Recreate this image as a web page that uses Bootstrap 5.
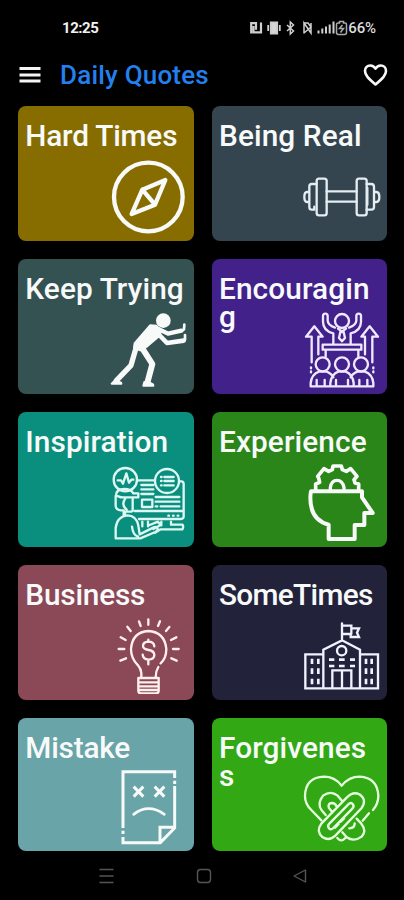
<!DOCTYPE html>
<html lang="en">
<head>
<meta charset="utf-8">
<meta name="viewport" content="width=device-width, initial-scale=1">
<title>Daily Quotes</title>
<link href="https://cdn.jsdelivr.net/npm/bootstrap@5.3.0/dist/css/bootstrap.min.css" rel="stylesheet">
<style>
body{background:#000;font-family:Roboto,"Liberation Sans",sans-serif;height:900px;overflow:hidden}
.status{height:50px;padding:6px 28px 0 62px;color:#dcdcdc}
.clock{font-size:15px;font-weight:700;letter-spacing:-.45px;color:#f2f2f2}
.pct{font-size:15px;font-weight:500;letter-spacing:-.1px;line-height:1}
.topbar{height:56px;padding:0 16px 6px 19px}
.app-title{color:#2380ee;font-size:26px;font-weight:500;letter-spacing:.2px;line-height:1;margin-left:19px}
.tiles{display:grid;grid-template-columns:175.7px 175.7px;grid-template-rows:repeat(4,135px) 133px;gap:18px;padding:0 0 0 18px}
.tile{border:0;border-radius:8px;overflow:hidden;padding:16px 5.600px 6px 7.300px}
.tile-title{color:#f8faf9;font-size:29.8px;font-weight:500;line-height:28px;letter-spacing:.1px;margin:0;height:33px;white-space:nowrap}
.tight{letter-spacing:-.7px}
.snug{letter-spacing:-.2px}
.art{width:80px;height:80px;flex:none;fill:none;stroke:#f8faf9;stroke-width:9;stroke-linejoin:round;stroke-linecap:round}
.solid{fill:#f8faf9}
.c1{background:#876d00}.c2{background:#344550}.c3{background:#355252}.c4{background:#42218a}.c5{background:#0a8f7e}
.c6{background:#2a8618}.c7{background:#8b4857}.c8{background:#22233b}.c9{background:#69a4a9}.c10{background:#31a814}
.sysbar{height:49px;padding:0 97px 0 98px}
.sysbar svg{fill:none;stroke:#555;stroke-width:1.4}
</style>
<script src="https://cdn.jsdelivr.net/npm/bootstrap@5.3.0/dist/js/bootstrap.bundle.min.js"></script>
</head>
<body>
<div class="status d-flex align-items-center justify-content-between">
  <span class="clock">12:25</span>
  <div class="d-flex align-items-center">
    <svg width="98" height="16" viewBox="0 0 98 16" fill="none" stroke="#cfcfcf" stroke-width="2.200">
      <path d="M1.200 13.500V3.200H6v6.500M3.500 6v6.400h7.500V2.500"/>
      <path d="M21 2.500h6v11h-6z" fill="#d8d8d8"/><path d="M18.200 5v6M29.800 5v6" stroke-width="1.800"/>
      <path d="M37 5l6.500 6-3.200 3V2l3.200 3L37 11" stroke-width="1.500"/>
      <path d="M54 13.500V3l7 10V3M54 3h4l3 4-7 6" stroke-width="1.500"/>
      <path d="M68.500 13.500v-3M72.300 13.500v-5M76 13.500v-7M79.700 13.500v-9M83.500 13.500v-12" stroke-width="2"/>
      <path d="M89.500 3V1.500h4V3h1.500q1.500 0 1.500 1.500v8q0 2-2 2h-6q-2 0-2-2v-8Q86.500 3 88 3zM92.500 5l-3 3.500h4l-3 4" stroke="#aaa" stroke-width="1.500"/>
    </svg>
    <span class="pct">66%</span>
  </div>
</div>
<nav class="topbar d-flex align-items-center">
  <svg width="22" height="16" viewBox="0 0 22 16" stroke="#f5f5f5" stroke-width="2.800"><path d="M.5 1.500h21M.5 8h21M.5 14h21"/></svg>
  <h1 class="app-title mb-0">Daily Quotes</h1>
  <svg class="ms-auto" width="25" height="23" viewBox="0 0 25 23" fill="none" stroke="#f8f8f8" stroke-width="2.600" stroke-linejoin="round"><path d="M12.500 20.500C5 14 2 11 2 7C2 3.500 4.500 1.500 7.200 1.500c2.300 0 4.200 1.200 5.300 3.200C13.600 2.700 15.500 1.500 17.800 1.500C20.500 1.500 23 3.500 23 7c0 4-3 7-10.500 13.500z"/></svg>
</nav>
<main class="tiles">
  <section class="tile card c1"><h2 class="tile-title snug">Hard Times</h2>
    <svg class="art ms-auto" viewBox="295 165 240 240"><g stroke-width="13"><circle cx="416" cy="291" r="103"/><path d="M467 240L398 269L366 342L436 314zM398 269L436 314"/></g></svg></section>
  <section class="tile card c2"><h2 class="tile-title">Being Real</h2>
    <svg class="art ms-auto" viewBox="294 165 240 240"><g stroke-width="7" stroke="#e4edf2"><rect x="338" y="236" width="30" height="110" rx="7"/><rect x="458" y="236" width="30" height="110" rx="7"/><path d="M368 274h90M368 305h90M338 252h-15q-7 0-7 7v63q0 7 7 7h8M316 276h-7q-8 0-8 15t8 15h7M488 252h14q8 0 8 8v61q0 8-8 8h-14M490 264v50M510 276h7q9 0 9 15t-9 15h-7M331 320v8"/></g></svg></section>
  <section class="tile card c3"><h2 class="tile-title">Keep Trying</h2>
    <svg class="art ms-auto" viewBox="295 162 240 240"><circle class="solid" cx="461" cy="200" r="22" stroke="none"/><path class="solid" stroke-width="8" d="M422 215L440 216L452 232L450 244L412 276L392 288L374 280L376 268z"/><path stroke-width="13" d="M440 222L475 239L515 230"/><path stroke-width="14" d="M446 240L472 267L522 260"/><path stroke-width="8" d="M515 231L523 226L524 212M521 261L526 257V243"/><path stroke-width="18" d="M398 283L428 330L413 386"/><path stroke-width="16" d="M379 282L364 334L320 380"/><path class="solid" stroke-width="6" d="M312 383L306 389H335L334 386L320 380zM404 384L401 395H431L430 391L416 384z"/></svg></section>
  <section class="tile card c4"><h2 class="tile-title">Encouragin<br>g</h2>
    <svg class="art ms-auto" viewBox="294 162 240 240"><g stroke-width="7" stroke="#eee9ff">
      <circle cx="414" cy="201" r="21"/><path d="M388 270v-32q-31-8-31-35v-17q0-7 7-7t7 7v14q1 14 22 21M440 270v-32q31-8 31-35v-17q0-7-7-7t-7 7v14q-1 14-22 21M402 224l12 9 12-9M409 234h10l4 18-9 10-9-10zM356 272h116v15H356zM365 288v20M463 288v20M323 325v-77h-17l25-31 25 31h-13v53M505 325v-77h17l-25-31-25 31h11v53M321 340v3M321 352v3M508 340v3M508 352v3"/>
      <circle cx="356" cy="331" r="21"/><circle cx="414" cy="331" r="21"/><circle cx="471" cy="331" r="21"/>
      <path d="M320 397v-10q3-26 25-34h23q15 6 20 17M508 397v-10q-3-26-25-34h-23q-15 6-20 17M379 397v-10q3-26 24-34h22q21 8 24 34v10M320 397h188M338 397v-19M396 397v-19M432 397v-19M490 397v-19M362 397v-19M466 397v-19"/></g></svg></section>
  <section class="tile card c5"><h2 class="tile-title">Inspiration</h2>
    <svg class="art ms-auto" viewBox="295 159 240 240"><g stroke-width="7" stroke="#ddf8f2">
      <circle cx="347" cy="215" r="35"/><circle cx="472" cy="219" r="36"/><path d="M324 217h10l6 10 10-31 8 28 7-9h6M454 207h2M454 219h2M454 232h2M464 207h28M464 219h28M464 232h28M383 217h52M509 220h6q7 0 7 8v97q0 8-8 8H388M374 309h147M395 231h36M395 244h36M395 258h36M397 275h31v22h-31zM438 267h71M438 281h71M438 295h5M453 295h56M476 323h2M490 323h2M504 323h2"/>
      <path d="M319 263q0-20 25-20 20 0 27 13h15v12h-39q-13 1-21-3zM318 264v29q0 12 15 14h9v15M347 271q-14 20 4 34M369 270v35q0 6-9 6h-14v12M318 389v-29q4-35 36-38 28 2 32 31l4 26 42-21q9-4 12 4 1 6-7 10l-45 19H318M367 356q3 26 18 30M398 341v14M415 341v14M455 341v11M484 341v9h34q5 5 0 14h-65l-17 10M420 351l25-10 8 10-22 12"/></g></svg></section>
  <section class="tile card c6"><h2 class="tile-title">Experience</h2>
    <svg class="art ms-auto" viewBox="294 159 240 240"><g stroke-width="12"><path d="M321 250H474v18l32 47h-25v36h-29v42h-78v-43q-55-14-55-80 0-11 2-20z"/><path d="M335 248v-20l12-5-3-13-3-5 19-23 14 8 11-5 2-11h25l3 11 12 5 13-8 19 23-9 10 3 10 11 3v20" stroke-width="11"/><path d="M379 248v-9q3-22 20-22t21 22v9" stroke-width="10"/></g></svg></section>
  <section class="tile card c7"><h2 class="tile-title snug">Business</h2>
    <svg class="art ms-auto" viewBox="295 162 240 240"><g stroke-width="7" stroke="#fff0ed"><path d="M395 351v-12q-1-12-10-23-21-20-21-49 4-51 52-54 49 3 54 54 0 27-17 43M446 321q-8 13-8 30M386 354h61v39q0 7-8 7h-45q-8 0-8-7zM389 367h55M389 379h55M389 390h55"/><path d="M416 178v16M388 184l5 14M353 200l10 13M333 232l15 8M327 267h17M332 302l17-7M451 184l-6 14M479 201l-10 12M500 232l-16 8M507 267h-17M501 302l-16-7"/><path d="M434 259q-1-14-18-14-16 1-16 13 0 9 17 12 17 3 17 15 0 13-18 14-16-1-17-15M416 239v6M416 299v14"/></g></svg></section>
  <section class="tile card c8"><h2 class="tile-title tight">SomeTimes</h2>
    <svg class="art ms-auto" viewBox="294 162 240 240"><g stroke-width="7" stroke="#f1f2ff" stroke-linejoin="miter"><path d="M304 385V283h54v-14l56-28 54 28v14h54v102zM358 283v102M468 283v102M414 240v-50M414 197h28v8h23l-6 13 6 13h-25v-9h-26M442 205v16M385 385v-54h57v54M414 331v54"/><circle cx="413" cy="272" r="14"/><path stroke-width="8" stroke-linecap="butt" d="M324 296v16M343 296v16M324 325v17M343 325v17M324 356v17M343 356v17M486 296v16M503 296v16M486 325v17M503 325v17M486 356v17M503 356v17M375 299h16M405 299h17M438 299h15M375 318h16M405 318h17M438 318h15"/></g></svg></section>
  <section class="tile card c9"><h2 class="tile-title snug">Mistake</h2>
    <svg class="art ms-auto" viewBox="295 165 240 240"><g stroke-linecap="butt" stroke-linejoin="miter"><path d="M495 204v-19H340v169M340 362v10M340 381v17h112l43-44V228M495 212v10M451 398v-46h44"/><path d="M372 230l29 30M401 230l-29 30M435 230l29 30M464 230l-29 30"/><path stroke-linecap="round" d="M372 313q44-34 92 0" stroke-width="8"/></g></svg></section>
  <section class="tile card c10"><h2 class="tile-title">Forgivenes<br>s</h2>
    <svg class="art ms-auto" viewBox="294 165 240 240"><g stroke-width="7" stroke="#e3ffdc"><path d="M352 325l-30-31q-19-18-19-43 2-55 57-57 32 0 53 27 22-27 54-27 53 3 56 57 0 24-16 43M495 304l-19 22M400 378q12 14 24 0"/><path d="M352 335l76-78q19-20 38-10 24 16 7 41l-79 83q-18 17-38 5-21-18-4-41zM376 335l57-58q7-7 13-1 6 7-1 14l-57 58q-7 7-13 1-6-7 1-14zM365 309l-12-14q-15-20 4-44 23-17 44 0l14 17M383 298l-8-10q-5-14 9-15 9 0 13 9M458 320l14 15q17 22 1 39-23 17-45 2l-13-15M436 349q16 0 16-15M393 347l11-11M410 329l10-10"/></g></svg></section>
</main>
<footer class="sysbar d-flex align-items-center justify-content-between">
  <svg width="17" height="16" viewBox="0 0 17 16"><path d="M1.500 1.500h14M1.500 8h14M1.500 14.500h14"/></svg>
  <svg width="16" height="16" viewBox="0 0 16 16"><rect x="1.500" y="1.500" width="13" height="13" rx="3"/></svg>
  <svg width="15" height="16" viewBox="0 0 15 16"><path d="M13.500 2v12L2 8z" stroke-linejoin="round"/></svg>
</footer>
</body>
</html>
